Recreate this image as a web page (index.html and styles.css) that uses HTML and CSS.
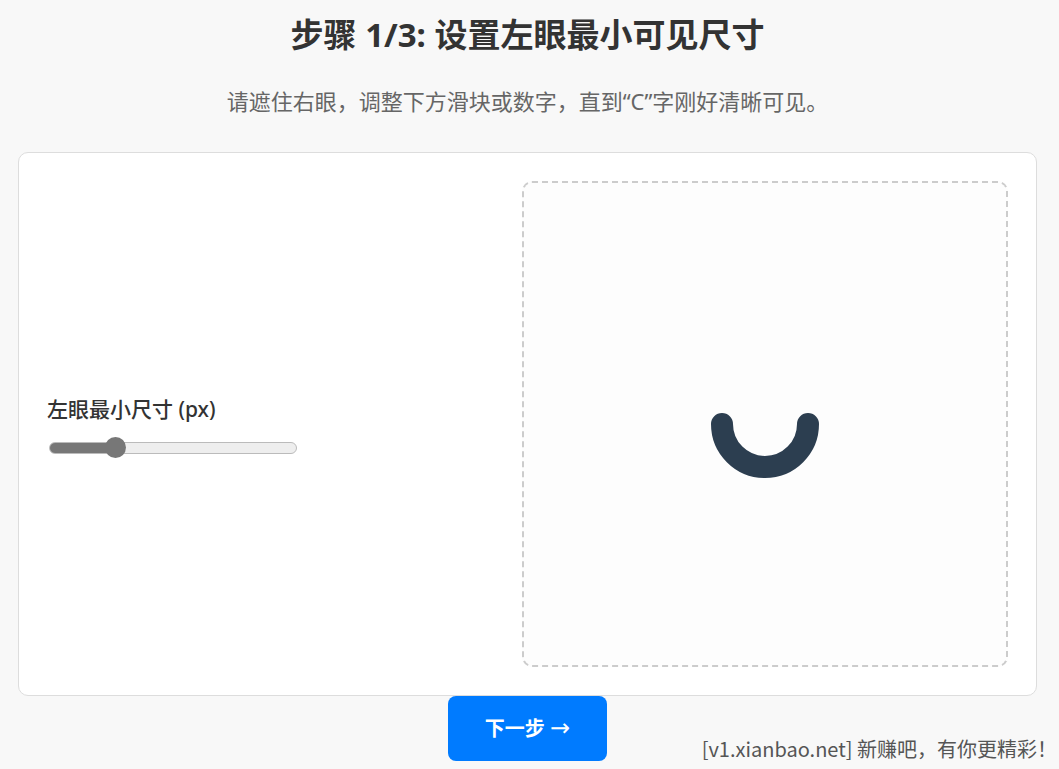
FILE: index.html
```html
<html>
  <head>
    <title>步骤 1/3</title>
    <link rel="stylesheet" href="styles.css">
  </head>
  <body>
    <main class="page">
      <h1 class="step-title">步骤 1/3: 设置左眼最小可见尺寸</h1>
      <p class="step-hint">请遮住右眼，调整下方滑块或数字，直到“C”字刚好清晰可见。</p>

      <section class="test-card">
        <div class="controls">
          <label class="control-label" for="size">左眼最小尺寸 (px)</label>
          <input type="range" id="size" class="size-slider" min="1" max="100" value="25">
        </div>

        <div class="preview-box">
          <svg class="c-mark" width="110" height="110" viewBox="0 0 110 110">
            <path d="M12 55 A43 43 0 0 0 98 55" fill="none" stroke="#2c3e50" stroke-width="22" stroke-linecap="round"/>
          </svg>
        </div>
      </section>

      <button type="button" class="next-button">下一步 <span class="arrow">→</span></button>
    </main>

    <div class="watermark">[v1.xianbao.net] 新赚吧，有你更精彩！</div>
  </body>
</html>
```

FILE: styles.css
```css
body {
  margin: 0;
  background-color: #f8f8f8;
  font-family: "Noto Sans", "Noto Sans CJK SC", sans-serif;
  color: #333;
  height: 769px;
  overflow: hidden;
}

.page {
  display: flex;
  flex-direction: column;
  align-items: center;
  padding: 0 22px 0 18px;
}

.step-title {
  margin: 15px 0 0;
  font-size: 33px;
  line-height: 1.2;
  font-weight: 700;
  color: #333;
}

.step-hint {
  margin: 30px 0 0;
  font-size: 22px;
  line-height: 32px;
  color: #666;
}

.test-card {
  align-self: stretch;
  margin-top: 35px;
  display: flex;
  align-items: center;
  padding: 28px;
  background-color: #fff;
  border: 1px solid #ddd;
  border-radius: 10px;

  .controls {
    flex: 1;
    display: flex;
    flex-direction: column;
  }

  .control-label {
    font-size: 21px;
    line-height: 30px;
    font-weight: 500;
    color: #333;
    margin-bottom: 18px;
  }

  .size-slider {
    -webkit-appearance: none;
    appearance: none;
    width: 248px;
    height: 12px;
    margin: 0 0 0 2px;
    border: 1px solid #bbb;
    border-radius: 6px;
    background: linear-gradient(to right, #777 26%, #eee 26%);
    outline: none;
  }

  .size-slider::-webkit-slider-thumb {
    -webkit-appearance: none;
    appearance: none;
    width: 21px;
    height: 21px;
    border-radius: 50%;
    background-color: #777;
    border: none;
  }

  .preview-box {
    width: 486px;
    height: 486px;
    box-sizing: border-box;
    border: 2px dashed #ccc;
    border-radius: 10px;
    background-color: #fdfdfd;
    display: flex;
    align-items: center;
    justify-content: center;
  }
}

.next-button {
  margin-top: 0;
  padding: 17px 37px;
  font-family: inherit;
  font-size: 20px;
  line-height: 30px;
  font-weight: 700;
  color: #fff;
  background-color: #007bff;
  border: none;
  border-radius: 8px;
  cursor: pointer;

  .arrow {
    font-family: "DejaVu Sans", sans-serif;
    font-weight: 400;
    font-size: 24px;
  }
}

.watermark {
  position: absolute;
  right: 2px;
  bottom: 8px;
  font-family: "Noto Sans CJK SC", sans-serif;
  font-size: 20px;
  line-height: 24px;
  color: #555;
}
```
